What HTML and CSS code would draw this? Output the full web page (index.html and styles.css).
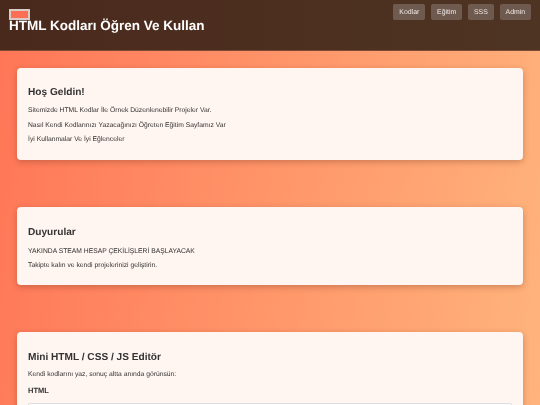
FILE: index.html
```html
<!DOCTYPE html>
<html lang="tr">
<head>
<meta charset="utf-8">
<title>HTML Kodları Öğren Ve Kullan</title>
<link rel="stylesheet" href="styles.css">
</head>
<body>
<header class="site-header">
  <div class="logo"></div>
  <h1 class="site-title">HTML Kodları Öğren Ve Kullan</h1>
  <nav class="site-nav">
    <a class="nav-btn" href="#">Kodlar</a>
    <a class="nav-btn" href="#">Eğitim</a>
    <a class="nav-btn" href="#">SSS</a>
    <a class="nav-btn" href="#">Admin</a>
  </nav>
</header>
<main class="content">
  <section class="card card-welcome">
    <h2>Hoş Geldin!</h2>
    <p>Sitemizde HTML Kodlar İle Örnek Düzenlenebilir Projeler Var.</p>
    <p>Nasıl Kendi Kodlarınızı Yazacağınızı Öğreten Eğitim Sayfamız Var</p>
    <p>İyi Kullanmalar Ve İyi Eğlenceler</p>
  </section>
  <section class="card card-news">
    <h2>Duyurular</h2>
    <p>YAKINDA STEAM HESAP ÇEKİLİŞLERİ BAŞLAYACAK</p>
    <p>Takipte kalın ve kendi projelerinizi geliştirin.</p>
  </section>
  <section class="card card-editor">
    <h2>Mini HTML / CSS / JS Editör</h2>
    <p>Kendi kodlarını yaz, sonuç altta anında görünsün:</p>
    <h3>HTML</h3>
    <div class="code-box"></div>
  </section>
</main>
</body>
</html>
```
FILE: styles.css
```css
* { box-sizing: border-box; }
html, body { height: 405px; overflow: hidden; }
body {
  margin: 0;
  font-family: "Liberation Sans", Arial, sans-serif;
  color: #333;
  text-rendering: geometricPrecision;
  background: linear-gradient(98deg, #ff7657 0%, #ffb47c 100%);
}
.site-header {
  position: relative;
  height: 51px;
  display: flex;
  justify-content: space-between;
  align-items: flex-start;
  padding: 4px 9px;
  background: linear-gradient(90deg, #4a291d, #4e3422);
  border-bottom: 1px solid #7d4a33;
  will-change: transform;
}
.logo {
  position: absolute;
  left: 9px;
  top: 9px;
  width: 21px;
  height: 11px;
  background: #fd6f55;
  border: 2px solid #d9cbc5;
}
.site-title {
  margin: 10.5px 0 0;
  font-size: 13.5px;
  line-height: 22px;
  font-weight: 700;
  color: #fff;
}
.site-nav { display: flex; gap: 6px; }
.nav-btn {
  display: block;
  height: 16px;
  padding: 0 5.9px;
  font-size: 6.9px;
  line-height: 18px;
  color: #f3ece8;
  text-decoration: none;
  background: #6f5a50;
  border-radius: 2px;
}
.content {
  display: flex;
  flex-direction: column;
  gap: 47px;
  padding: 17px 17px 0;
  will-change: transform;
}
.card {
  flex: none;
  padding: 12px 11px;
  background: #fff5f1;
  border-radius: 4px;
  box-shadow: 0 2px 6px rgba(90, 40, 20, .3);
}
.card-welcome { height: 92px; }
.card-news { height: 78px; }
.card h2 {
  margin: 6px 0 8.25px;
  font-size: 10.125px;
  line-height: 13px;
  font-weight: 700;
}
.card-news h2 { margin-top: 6.5px; margin-bottom: 9px; }
.card-editor h2 { margin-top: 6.5px; margin-bottom: 7.3px; }
.card p {
  margin: 0 0 7px;
  font-size: 6.75px;
  line-height: 7.5px;
}
.card h3 {
  margin: 7.75px 0 8px;
  font-size: 7.5px;
  line-height: 9px;
  font-weight: 700;
}
.code-box {
  height: 60px;
  background: #fff;
  border: 1px solid #ddd;
  border-radius: 2px;
}
```
